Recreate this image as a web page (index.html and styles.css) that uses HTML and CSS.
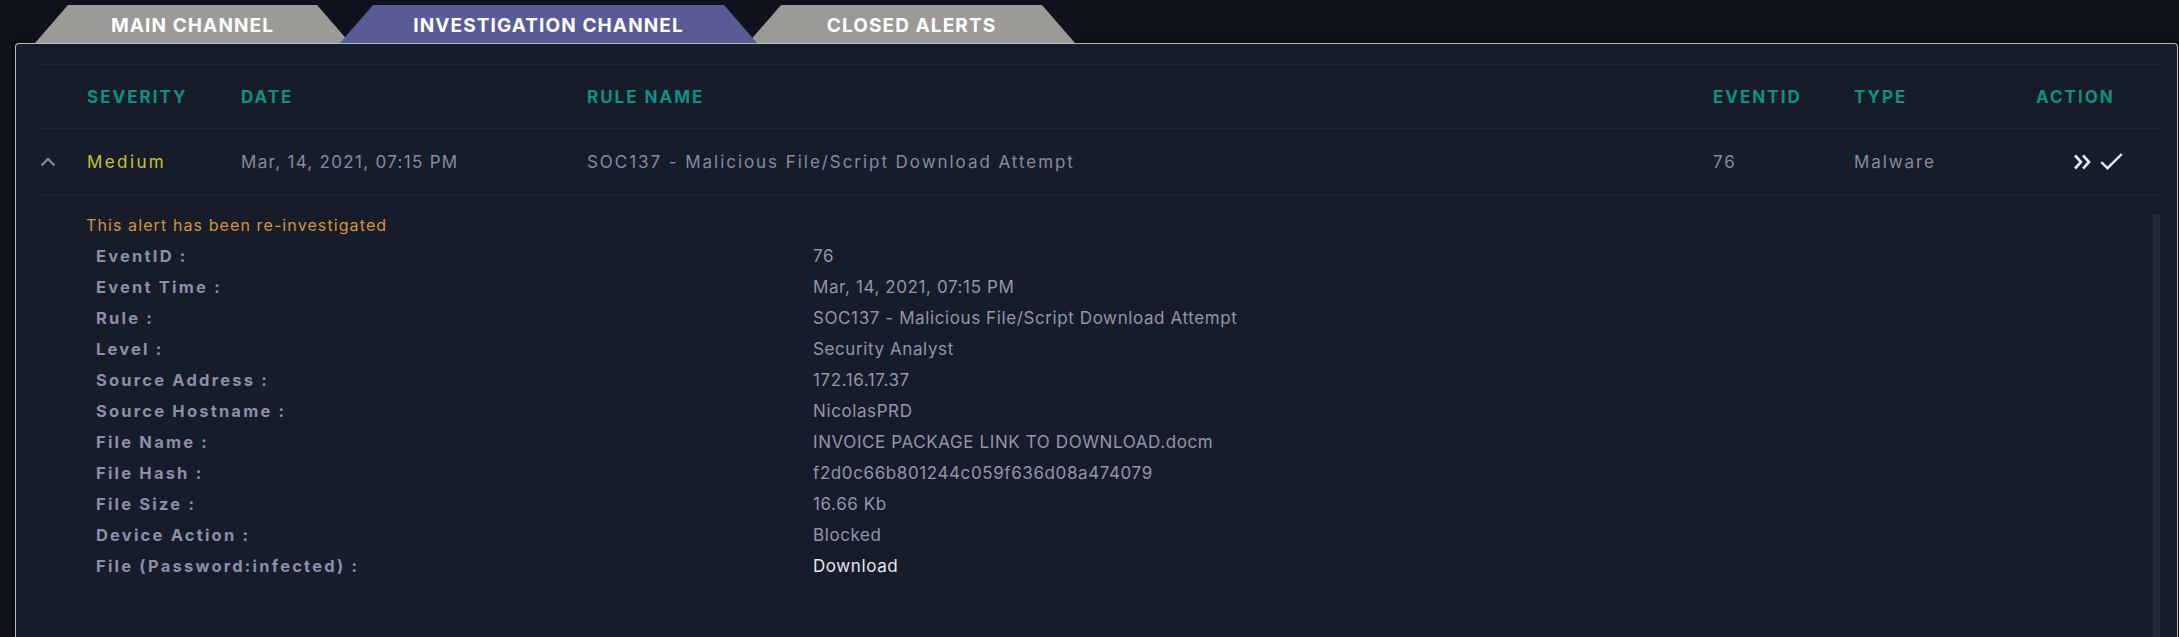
FILE: index.html
```html
<!DOCTYPE html>
<html lang="en">
<head>
<meta charset="utf-8">
<title>Alerts</title>
<link rel="stylesheet" href="styles.css">
</head>
<body>
<div class="tabs">
  <div class="tab tab-main">MAIN CHANNEL</div>
  <div class="tab tab-inv active">INVESTIGATION CHANNEL</div>
  <div class="tab tab-closed">CLOSED ALERTS</div>
</div>
<div class="panel">
  <div class="row head">
    <div class="c"></div>
    <div class="c">SEVERITY</div>
    <div class="c">DATE</div>
    <div class="c">RULE NAME</div>
    <div class="c">EVENTID</div>
    <div class="c">TYPE</div>
    <div class="c">ACTION</div>
  </div>
  <div class="row data">
    <div class="c chev">
      <svg width="16" height="10" viewBox="0 0 16 10"><polyline points="1.5,8.5 8,2 14.5,8.5" fill="none" stroke="#8b90a5" stroke-width="2"/></svg>
    </div>
    <div class="c sev">Medium</div>
    <div class="c date">Mar, 14, 2021, 07:15 PM</div>
    <div class="c rule">SOC137 - Malicious File/Script Download Attempt</div>
    <div class="c">76</div>
    <div class="c">Malware</div>
    <div class="c actions">
      <svg width="18" height="16" viewBox="0 0 18 16"><path d="M2 1.5 L8 8 L2 14.5 M10 1.5 L16 8 L10 14.5" fill="none" stroke="#e9eaef" stroke-width="2.6"/></svg>
      <svg width="23" height="17" viewBox="0 0 23 17"><path d="M1.2 9 L7.5 15.2 L21.8 1" fill="none" stroke="#e9eaef" stroke-width="2.4"/></svg>
    </div>
  </div>
  <div class="detail">
    <div class="detail-body">
      <div class="note">This alert has been re-investigated</div>
      <div class="fields">
        <div class="k">EventID :</div><div class="v">76</div>
        <div class="k">Event Time :</div><div class="v">Mar, 14, 2021, 07:15 PM</div>
        <div class="k">Rule :</div><div class="v">SOC137 - Malicious File/Script Download Attempt</div>
        <div class="k">Level :</div><div class="v">Security Analyst</div>
        <div class="k">Source Address :</div><div class="v">172.16.17.37</div>
        <div class="k">Source Hostname :</div><div class="v">NicolasPRD</div>
        <div class="k">File Name :</div><div class="v">INVOICE PACKAGE LINK TO DOWNLOAD.docm</div>
        <div class="k">File Hash :</div><div class="v">f2d0c66b801244c059f636d08a474079</div>
        <div class="k">File Size :</div><div class="v">16.66 Kb</div>
        <div class="k">Device Action :</div><div class="v">Blocked</div>
        <div class="k">File (Password:infected) :</div><div class="v link">Download</div>
      </div>
    </div>
    <div class="track"></div>
  </div>
</div>
</body>
</html>
```
FILE: styles.css
```css
html, body {
  margin: 0;
  padding: 0;
  height: 100%;
  overflow: hidden;
}
body {
  background: #0f111c;
  font-family: Inter, "Open Sans", sans-serif;
  color: #8b90a5;
}
.tabs {
  display: flex;
  padding: 5px 0 0 35px;
  height: 38px;
}
.tab {
  position: relative;
  height: 38px;
  display: flex;
  align-items: center;
  justify-content: center;
  background: #9b9a97;
  color: #ffffff;
  font-weight: 700;
  font-size: 19px;
  letter-spacing: 1.1px;
  clip-path: polygon(33px 0, calc(100% - 33px) 0, 100% 100%, 0 100%);
  padding-top: 2px;
  box-sizing: border-box;
}
.tab-main { width: 315px; }
.tab-inv { width: 417px; margin-left: -10px; }
.tab-closed { width: 327px; margin-left: -9px; }
.tab.active {
  background: #585b95;
  z-index: 2;
}
.panel {
  margin-left: 15px;
  width: 2163px;
  height: 600px;
  box-sizing: border-box;
  background: #171c2a;
  border-top: 1px solid #b9b9bd;
  border-left: 1px solid #b9b9bd;
  border-right: 1px solid #b9b9bd;
  border-radius: 4px 4px 0 0;
  box-shadow: 0 0 6px rgba(0, 0, 0, 0.7);
  padding: 20px 17px 0 20px;
}
.row {
  display: grid;
  grid-template-columns: 51px 154px 346px 1126px 141px 182px 124px;
  align-items: center;
  border-bottom: 1px solid #20263d;
}
.row.head {
  border-top: 1px solid #20263d;
  height: 65px;
  box-sizing: border-box;
  color: #0f9083;
  font-weight: 700;
  font-size: 17px;
  letter-spacing: 2px;
}
.row.data {
  height: 66px;
  box-sizing: border-box;
  font-size: 17px;
  letter-spacing: 1.9px;
  color: #868ba1;
}
.row.data .date { letter-spacing: 1.3px; }
.row.data .rule { letter-spacing: 1.95px; }
.chev {
  display: flex;
  padding-left: 4px;
}
.sev { color: #c9c32b; letter-spacing: 2.4px; }
.actions {
  display: flex;
  align-items: center;
  gap: 9px;
  padding-left: 37px;
}
.detail {
  display: flex;
  margin-top: 19px;
  height: 430px;
}
.detail-body {
  flex: 1;
  padding-left: 50px;
  overflow: hidden;
}
.track {
  width: 7px;
  background: #242938;
}
.note {
  color: #d6933b;
  font-size: 16px;
  line-height: 22px;
  letter-spacing: 1.1px;
}
.fields {
  margin-top: 4px;
  display: grid;
  grid-template-columns: 717px 1fr;
  grid-auto-rows: 31px;
  align-items: center;
  padding-left: 10px;
}
.k {
  color: #8b8fa8;
  font-weight: 700;
  font-size: 16.5px;
  letter-spacing: 2.2px;
}
.v {
  color: #9396a8;
  font-size: 17px;
  letter-spacing: 0.6px;
}
.v.link { color: #e8e8ee; }
```
